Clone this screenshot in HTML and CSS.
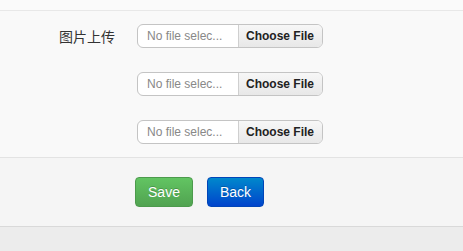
FILE: index.html
```html
<!DOCTYPE html>
<html lang="zh">
<head>
<meta charset="utf-8">
<link rel="stylesheet" href="styles.css">
</head>
<body>
<div class="topbar"></div>
<form class="form">
  <div class="fields">
    <div class="row">
      <label class="label">图片上传</label>
      <div class="file"><span class="file-name">No file selec...</span><span class="file-btn">Choose File</span></div>
    </div>
    <div class="row">
      <span class="label"></span>
      <div class="file"><span class="file-name">No file selec...</span><span class="file-btn">Choose File</span></div>
    </div>
    <div class="row">
      <span class="label"></span>
      <div class="file"><span class="file-name">No file selec...</span><span class="file-btn">Choose File</span></div>
    </div>
  </div>
  <div class="actions">
    <button type="button" class="btn btn-success">Save</button>
    <button type="button" class="btn btn-primary">Back</button>
  </div>
</form>
</body>
</html>
```

FILE: styles.css
```css
html, body {
  margin: 0;
  padding: 0;
}
body {
  background: #ececec;
  font-family: "Liberation Sans", Arial, "Noto Sans CJK SC", sans-serif;
  font-size: 12px;
  color: #333;
}
.topbar {
  height: 10px;
  background: #fafafa;
  border-bottom: 1px solid #e8e8e8;
}
.form {
  margin: 0;
  background: #f9f9f9;
}
.fields {
  padding: 13px 0 13px 0;
  display: flex;
  flex-direction: column;
  gap: 24px;
}
.row {
  display: grid;
  grid-template-columns: 115px auto;
  column-gap: 22px;
  align-items: center;
  justify-content: start;
}
.label {
  text-align: right;
  font-size: 14px;
  color: #333;
  font-family: "Noto Sans CJK SC", "Liberation Sans", sans-serif;
}
.file {
  display: flex;
  width: 186px;
  height: 24px;
  box-sizing: border-box;
  border: 1px solid #c4c4c4;
  border-radius: 6px;
  overflow: hidden;
  background: #fff;
}
.file-name {
  width: 101px;
  box-sizing: border-box;
  padding-left: 9px;
  line-height: 22px;
  color: #888;
  border-right: 1px solid #cfcfcf;
  white-space: nowrap;
}
.file-btn {
  flex: 1;
  line-height: 22px;
  text-align: center;
  padding-right: 1px;
  font-weight: bold;
  color: #222;
  background: linear-gradient(#f7f7f7, #e8e8e8);
  white-space: nowrap;
}
.actions {
  display: flex;
  gap: 14px;
  padding: 19px 0 19px 135px;
  background: #f5f5f5;
  border-top: 1px solid #e3e3e3;
  border-bottom: 1px solid #d9d9d9;
}
.btn {
  height: 30px;
  padding: 0;
  font-family: "Liberation Sans", Arial, sans-serif;
  font-size: 14px;
  color: #fff;
  text-shadow: 0 -1px 0 rgba(0,0,0,0.2);
  border-radius: 4px;
  cursor: pointer;
}
.btn-success {
  width: 58px;
  background: linear-gradient(#62c462, #51a351);
  border: 1px solid #4c9a4c;
}
.btn-primary {
  width: 57px;
  background: linear-gradient(#0088cc, #0044cc);
  border: 1px solid #0045b8;
}
```
